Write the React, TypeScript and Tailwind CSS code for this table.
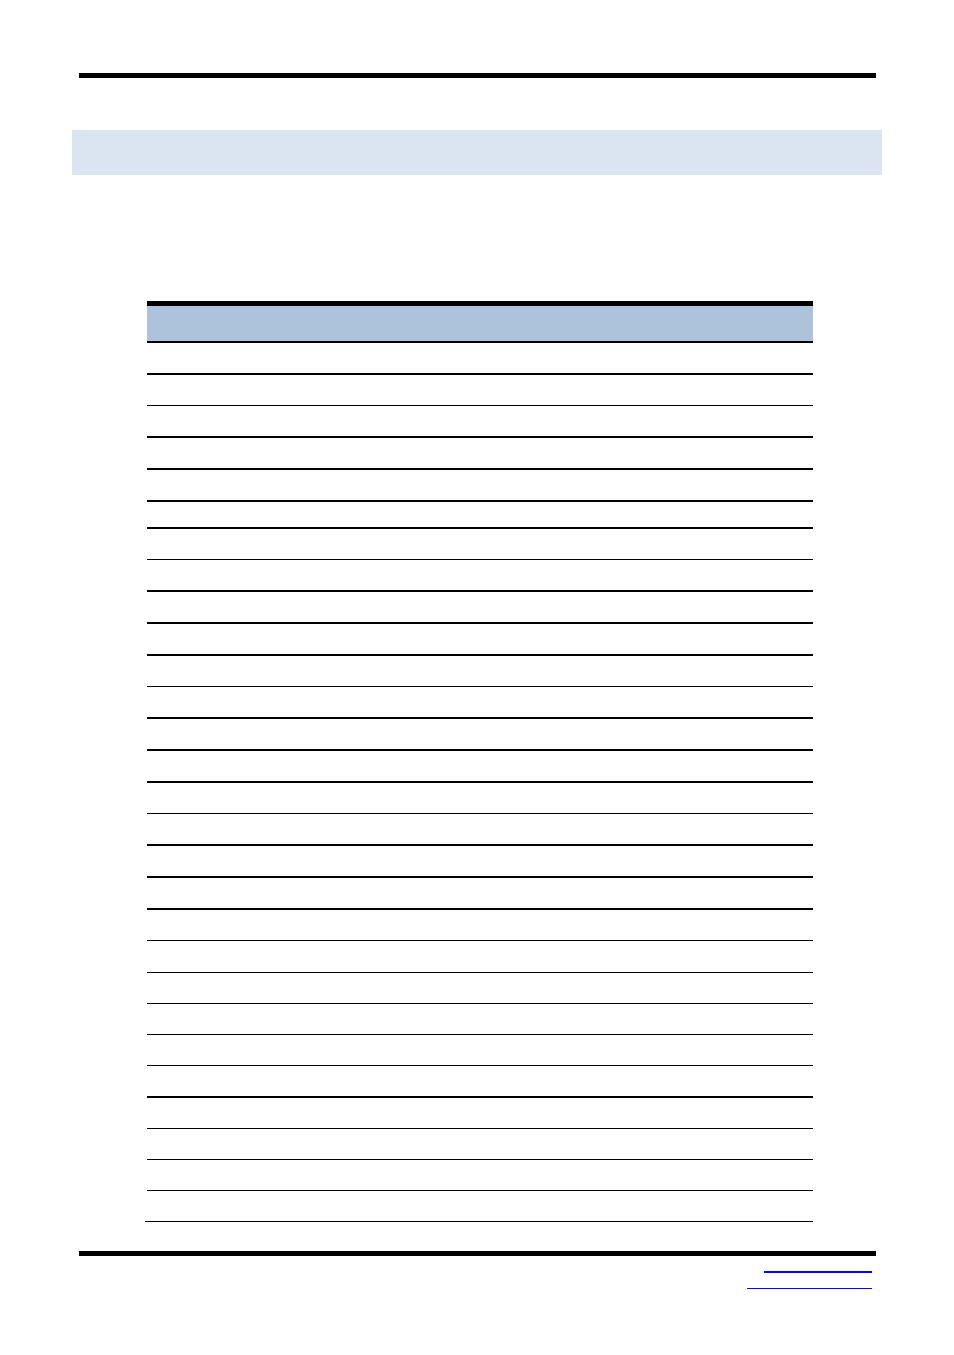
const ROWS: { h: number; thick: boolean }[] = [
  { h: 32, thick: true },
  { h: 31, thick: false },
  { h: 32, thick: true },
  { h: 32, thick: true },
  { h: 32, thick: true },
  { h: 27, thick: true },
  { h: 31, thick: false },
  { h: 32, thick: true },
  { h: 32, thick: true },
  { h: 32, thick: true },
  { h: 31, thick: false },
  { h: 32, thick: true },
  { h: 32, thick: true },
  { h: 32, thick: true },
  { h: 31, thick: false },
  { h: 32, thick: true },
  { h: 32, thick: true },
  { h: 32, thick: true },
  { h: 31, thick: false },
  { h: 32, thick: false },
  { h: 31, thick: false },
  { h: 31, thick: false },
  { h: 31, thick: false },
  { h: 32, thick: true },
  { h: 31, thick: false },
  { h: 31, thick: false },
  { h: 31, thick: false },
  { h: 31, thick: false },
];

export default function App() {
  return (
    <div
      className="flex min-h-[1355px] w-[954px] flex-col bg-white"
      style={{ fontFamily: '"Liberation Sans", Arial, sans-serif' }}
    >
      {/* header rule */}
      <div className="ml-[79px] mt-[73px] h-[5px] w-[797px] bg-black" />

      {/* section title band */}
      <div className="ml-[72px] mt-[52px] h-[45px] w-[810px] bg-[#dbe5f1]" />

      {/* table */}
      <div className="ml-[147px] mt-[126px] flex w-[666px] flex-col">
        <div className="h-[42px] border-t-[5px] border-b-2 border-black bg-[#adc2db]" />
        {ROWS.map((r, i) => {
          const last = i === ROWS.length - 1;
          return (
            <div
              key={i}
              className={
                (r.thick ? "border-b-2 " : "border-b ") +
                "border-black " +
                (last ? "-ml-[2px] w-[668px]" : "")
              }
              style={{ height: r.h }}
            />
          );
        })}
      </div>

      {/* footer rule */}
      <div className="ml-[79px] mt-[29px] h-[5px] w-[797px] bg-black" />

      {/* footer links */}
      <div className="mr-[82px] flex flex-col items-end">
        <div className="mt-[15px] h-[1.5px] w-[108px] bg-[#0000ff]" />
        <div className="mt-[15px] h-[1.5px] w-[125px] bg-[#0000ff]" />
      </div>
    </div>
  );
}
